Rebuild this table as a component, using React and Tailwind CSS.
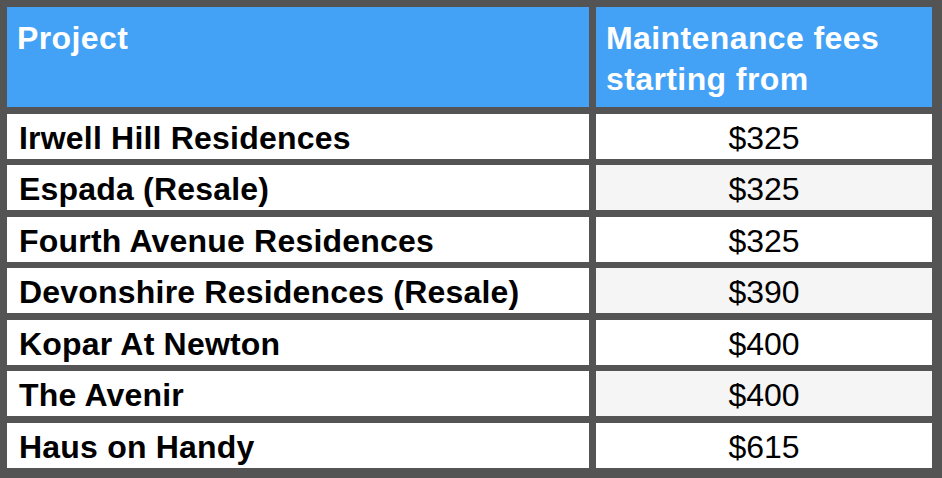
const rows = [
  { name: 'Irwell Hill Residences', fee: '$325' },
  { name: 'Espada (Resale)', fee: '$325' },
  { name: 'Fourth Avenue Residences', fee: '$325' },
  { name: 'Devonshire Residences (Resale)', fee: '$390' },
  { name: 'Kopar At Newton', fee: '$400' },
  { name: 'The Avenir', fee: '$400' },
  { name: 'Haus on Handy', fee: '$615' },
];

const App = () => {
  return (
    <div className="w-[942px] h-[478px] bg-[#545454] pt-[7px] pl-[7px] pr-[10px] pb-[10px] font-['Liberation_Sans',Arial,sans-serif]">
      <div className="grid grid-cols-[582px_336px] grid-rows-[100px_repeat(7,45px)] gap-x-[7px] gap-y-[6.5px]">
        <div className="bg-[#44a2f6] text-white font-bold text-[32px] leading-[41px] tracking-[0.4px] pl-[10px] pt-[11px]">
          Project
        </div>
        <div className="bg-[#44a2f6] text-white font-bold text-[32px] leading-[41px] tracking-[0.4px] pl-[10px] pt-[11px]">
          Maintenance fees starting from
        </div>
        {rows.map((row, i) => (
          <div key={row.name} className="contents">
            <div className="bg-white text-black font-bold text-[32px] leading-[32px] tracking-[0.2px] pl-[12px] pt-[8px] whitespace-nowrap">
              {row.name}
            </div>
            <div
              className={`${i % 2 === 1 ? 'bg-[#f5f5f5]' : 'bg-white'} text-black text-[32px] leading-[32px] pt-[8px] text-center`}
            >
              {row.fee}
            </div>
          </div>
        ))}
      </div>
    </div>
  );
};

export default App;
